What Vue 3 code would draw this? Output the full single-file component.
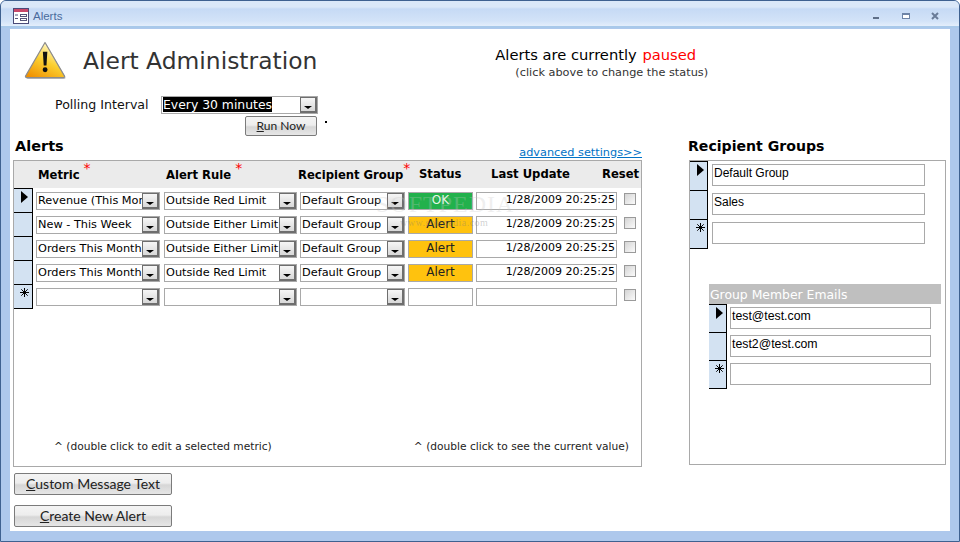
<script setup>
const rows = [
  { metric: 'Revenue (This Month)', rule: 'Outside Red Limit', group: 'Default Group', status: 'OK', kind: 'ok', update: '1/28/2009 20:25:25', current: true },
  { metric: 'New - This Week', rule: 'Outside Either Limit', group: 'Default Group', status: 'Alert', kind: 'alert', update: '1/28/2009 20:25:25' },
  { metric: 'Orders This Month', rule: 'Outside Either Limit', group: 'Default Group', status: 'Alert', kind: 'alert', update: '1/28/2009 20:25:25' },
  { metric: 'Orders This Month', rule: 'Outside Red Limit', group: 'Default Group', status: 'Alert', kind: 'alert', update: '1/28/2009 20:25:25' },
  { metric: '', rule: '', group: '', status: '', kind: '', update: '', isNew: true }
]
const columns = [
  { key: 'metric', cls: 'c-metric' },
  { key: 'rule', cls: 'c-rule' },
  { key: 'group', cls: 'c-group' }
]
const groups = [{ name: 'Default Group', current: true }, { name: 'Sales' }, { name: '', isNew: true }]
const emails = [{ name: 'test@test.com', current: true }, { name: 'test2@test.com' }, { name: '', isNew: true }]
</script>

<template>
  <div class="window">
    <header class="titlebar">
      <svg class="formicon" width="16" height="16" viewBox="0 0 16 16">
        <rect x="0.5" y="0.5" width="15" height="15" fill="#fff" stroke="#4a4a78" />
        <rect x="1" y="1" width="14" height="3" fill="#c8486a" />
        <path d="M2 7h3M2 10.500h3" stroke="#55557a" />
        <rect x="7.500" y="6.500" width="6" height="2" fill="#fff" stroke="#55557a" />
        <rect x="7.500" y="10.500" width="6" height="2" fill="#fff" stroke="#55557a" />
      </svg>
      <span class="wintitle">Alerts</span>
      <div class="winbtns">
        <svg width="8" height="8" viewBox="0 0 8 8"><rect x="0" y="5" width="6" height="2" fill="#5f6f88" /></svg>
        <svg width="8" height="8" viewBox="0 0 8 8"><rect x="0.500" y="1.500" width="7" height="5" fill="#fff" stroke="#6d83a6" /><rect x="0" y="1" width="8" height="2" fill="#6d83a6" /></svg>
        <svg width="8" height="8" viewBox="0 0 8 8"><path d="M1 1l6 6M7 1l-6 6" stroke="#6a7c98" stroke-width="2" /></svg>
      </div>
    </header>

    <div class="frame">
      <main class="form">
        <section class="head">
          <svg class="warn" width="43" height="39" viewBox="0 0 44 40">
            <defs>
              <linearGradient id="warnfill" x1="0.15" y1="1" x2="0.7" y2="0">
                <stop offset="0" stop-color="#f09000" />
                <stop offset="0.5" stop-color="#fbcf30" />
                <stop offset="0.85" stop-color="#fff0a8" />
                <stop offset="1" stop-color="#ffffff" />
              </linearGradient>
            </defs>
            <path d="M22.500 2.500 L42.500 37 Q43 39 41 39 L4 39 Q2 39 2.500 37 Z" fill="#bbb" />
            <path d="M21.500 1.500 L41.500 36 Q42 37.500 40 37.500 L3 37.500 Q1 37.500 1.500 36 Z" fill="url(#warnfill)" stroke="#8c8c8c" stroke-width="1.200" stroke-linejoin="round" />
            <path d="M19.300 11 h4.600 l-0.900 14 h-2.800 z" fill="#111" />
            <circle cx="21.600" cy="29.500" r="2.500" fill="#111" />
          </svg>
          <h1 class="title">Alert Administration</h1>
          <div class="state">
            <div class="state-main">Alerts are currently <span class="paused">paused</span></div>
            <div class="state-sub">(click above to change the status)</div>
          </div>
        </section>

        <section class="poll">
          <span class="poll-label">Polling Interval</span>
          <div class="combo poll-combo">
            <span class="combo-text"><span class="selected">Every 30 minutes</span></span>
            <span class="arrow"></span>
          </div>
        </section>
        <section class="run">
          <button class="btn run-btn"><u>R</u>un Now</button>
          <span class="dot"></span>
        </section>

        <section class="lists">
          <div class="left">
            <div class="section-head">
              <h2>Alerts</h2>
              <a class="advanced">advanced settings&gt;&gt;</a>
            </div>
            <div class="alerts-panel">
              <div class="col-heads">
                <span class="h-metric">Metric <i>*</i></span>
                <span class="h-rule">Alert Rule <i>*</i></span>
                <span class="h-group">Recipient Group<i>*</i></span>
                <span class="h-status">Status</span>
                <span class="h-update">Last Update</span>
                <span class="h-reset">Reset</span>
              </div>
              <div class="alert-rows">
                <div v-for="(r, i) in rows" :key="i" class="alert-row">
                  <div class="selector">
                    <span v-if="r.current" class="tri"></span>
                    <svg v-if="r.isNew" class="star" width="9" height="9" viewBox="0 0 9 9"><path d="M4.500 0v9M0 4.500h9M1.300 1.300l6.400 6.400M7.700 1.300l-6.400 6.400" stroke="#000" fill="none" /></svg>
                  </div>
                  <div v-for="c in columns" :key="c.key" class="combo" :class="c.cls">
                    <span class="combo-text">{{ r[c.key] }}</span>
                    <span class="arrow"></span>
                  </div>
                  <div class="status" :class="r.kind">{{ r.status }}</div>
                  <div class="updated">{{ r.update }}</div>
                  <span class="check"></span>
                </div>
              </div>
              <div class="notes">
                <span>^ (double click to edit a selected metric)</span>
                <span>^ (double click to see the current value)</span>
              </div>
              <div class="watermark">SOFTPEDIA<small>www.softpedia.com</small></div>
            </div>
            <div class="actions">
              <button class="btn big"><u>C</u>ustom Message Text</button>
              <button class="btn big"><u>C</u>reate New Alert</button>
            </div>
          </div>

          <div class="right">
            <div class="section-head"><h2>Recipient Groups</h2></div>
            <div class="groups-panel">
              <div class="plain-list">
                <div v-for="(g, i) in groups" :key="i" class="plain-row">
                  <div class="selector side">
                    <span v-if="g.current" class="tri"></span>
                    <svg v-if="g.isNew" class="star" width="9" height="9" viewBox="0 0 9 9"><path d="M4.500 0v9M0 4.500h9M1.300 1.300l6.400 6.400M7.700 1.300l-6.400 6.400" stroke="#000" fill="none" /></svg>
                  </div>
                  <div class="field">{{ g.name }}</div>
                </div>
              </div>
              <div class="members">
                <div class="members-title">Group Member Emails</div>
                <div v-for="(m, i) in emails" :key="i" class="plain-row email-row">
                  <div class="selector side">
                    <span v-if="m.current" class="tri"></span>
                    <svg v-if="m.isNew" class="star" width="9" height="9" viewBox="0 0 9 9"><path d="M4.500 0v9M0 4.500h9M1.300 1.300l6.400 6.400M7.700 1.300l-6.400 6.400" stroke="#000" fill="none" /></svg>
                  </div>
                  <div class="field email">{{ m.name }}</div>
                </div>
              </div>
            </div>
          </div>
        </section>
      </main>
    </div>
  </div>
</template>

<style>
html, body { margin: 0; background: #fff; }
</style>

<style scoped>
.window {
  width: 960px;
  height: 542px;
  box-sizing: border-box;
  display: flex;
  flex-direction: column;
  border: 1px solid #3f6190;
  border-radius: 6px 6px 0 0;
  background: #aec8ec;
  overflow: hidden;
  font-family: "DejaVu Sans", Verdana, sans-serif;
  color: #000;
}
.titlebar {
  height: 27px;
  flex: none;
  box-sizing: border-box;
  display: flex;
  align-items: center;
  padding: 5px 0 0 12px;
  background: linear-gradient(#dbe8f8 0, #dbe8f8 6px, #c6daf5 8px, #d3e3f8 20px, #e4eefb 25px);
  border-bottom: 2px solid #a9c9ea;
}
.wintitle {
  margin-left: 4px;
  font-family: "Liberation Sans", Arial, sans-serif;
  font-size: 11.500px;
  color: #4a6a9c;
}
.winbtns {
  margin-left: auto;
  display: flex;
  gap: 21px;
  padding-right: 20px;
}
.frame {
  flex: 1;
  min-height: 0;
  padding: 1px 9px 10px;
  display: flex;
}
.form {
  flex: 1;
  background: #fff;
  display: flex;
  flex-direction: column;
}
.head {
  height: 66px;
  display: flex;
  align-items: flex-start;
}
.warn { margin: 12px 0 0 14px; flex: none; }
.title {
  margin: 15px 0 0 16px;
  font-size: 23.400px;
  line-height: 34px;
  font-weight: 400;
  color: #333;
  white-space: nowrap;
}
.state { margin: 16px 0 0 178px; }
.state-main { font-size: 14.700px; line-height: 20px; }
.paused { color: #f00; margin-left: 1px; }
.state-sub { font-size: 11.300px; line-height: 14px; margin: 1px 0 0 20px; color: #333; }
.poll {
  height: 19px;
  display: flex;
  align-items: center;
  padding-left: 45px;
}
.poll-label { width: 106px; font-size: 12.600px; color: #111; }
.combo {
  display: flex;
  height: 18px;
  box-sizing: border-box;
  border: 1px solid #a9a9a9;
  background: #fff;
  overflow: hidden;
}
.poll-combo { width: 157px; }
.combo-text {
  flex: 1;
  min-width: 0;
  font-size: 11.300px;
  line-height: 15px;
  padding-left: 1px;
  white-space: nowrap;
  overflow: hidden;
}
.poll-combo .combo-text { font-size: 12.400px; line-height: 16px; padding-left: 1px; }
.selected { background: #000; color: #fff; }
.arrow {
  position: relative;
  flex: none;
  width: 17px;
  box-sizing: border-box;
  border: 1px solid #6e6e6e;
  border-right-width: 2px;
  border-bottom-width: 2px;
  background: linear-gradient(#f6f6f6, #d8d8d8);
}
.arrow::after {
  content: "";
  position: absolute;
  left: 3px;
  bottom: 2px;
  border-style: solid;
  border-width: 3px 4px 0;
  border-color: #000 transparent transparent;
}
.run {
  height: 23px;
  display: flex;
  align-items: flex-start;
  padding: 2px 0 0 235px;
}
.btn {
  box-sizing: border-box;
  border: 1px solid #7b7b7b;
  border-radius: 2px;
  background: linear-gradient(#f4f4f4 0, #ededed 45%, #d6d6d6 55%, #e6e6e6 100%);
  padding: 0 0 2px;
  color: #222;
  font-family: Lato, "Open Sans", sans-serif;
  cursor: default;
}
.run-btn { width: 72px; height: 20px; font-size: 12px; line-height: 15px; }
.dot { width: 2px; height: 2px; margin: 5px 0 0 8px; background: #000; }
.lists {
  flex: 1;
  display: flex;
  padding-left: 3px;
}
.left { width: 630px; flex: none; }
.right { width: 259px; margin-left: 46px; }
.section-head {
  height: 21px;
  display: flex;
  align-items: flex-start;
  justify-content: space-between;
}
.section-head h2 {
  margin: -4px 0 0;
  font-size: 14.500px;
  line-height: 22px;
  font-weight: 700;
  white-space: nowrap;
}
.left h2 { margin-left: 2px; }
.right h2 { margin-left: -1px; font-size: 14.100px; }
.left .section-head { width: 629px; }
.advanced {
  margin-top: 7px;
  font-size: 11.300px;
  line-height: 14px;
  color: #0072c6;
  text-decoration: underline;
}
.alerts-panel {
  position: relative;
  width: 629px;
  height: 307px;
  box-sizing: border-box;
  border: 1px solid #a9a9a9;
  display: flex;
  flex-direction: column;
}
.col-heads {
  height: 27px;
  padding-bottom: 2px;
  box-sizing: border-box;
  flex: none;
  background: #ebebeb;
  display: flex;
  align-items: center;
  font-size: 11.600px;
  font-weight: 700;
  white-space: nowrap;
}
.col-heads i {
  color: #f00;
  font-style: normal;
  font-weight: 400;
  font-size: 14px;
  position: relative;
  top: -6px;
}
.h-metric { margin-left: 24px; width: 128px; }
.h-rule { width: 132px; }
.h-group { width: 121px; }
.h-status { width: 72px; }
.h-update { width: 111px; }
.h-reset { width: 38px; }
.alert-row {
  height: 24px;
  display: flex;
  align-items: flex-start;
}
.selector {
  position: relative;
  flex: none;
  width: 18px;
  height: 100%;
  background: #d3e2f2;
  border-top: 1px solid #000;
  border-right: 1px solid #000;
  margin-right: 2px;
}
.alert-row .selector { height: 23px; margin-right: 3px; }
.alert-row:last-child .selector { border-bottom: 1px solid #000; }
.tri {
  position: absolute;
  left: 7px;
  top: 2px;
  border-style: solid;
  border-width: 6px 0 6px 7px;
  border-color: transparent transparent transparent #000;
}
.star {
  position: absolute;
  left: 6px;
  top: 3px;
}
.alert-row .combo, .status, .updated { margin-top: 4px; }
.c-metric { width: 124px; margin-right: 4px; }
.c-rule { width: 133px; margin-right: 3px; }
.c-group { width: 105px; margin-right: 3px; }
.status {
  width: 65px;
  height: 18px;
  box-sizing: border-box;
  border: 1px solid #a9a9a9;
  margin-right: 3px;
  text-align: center;
  font-size: 12px;
  line-height: 14px;
}
.status.ok { background: #22b14c; color: #e8f8e8; }
.status.alert { background: #ffc20e; color: #222; }
.updated {
  width: 141px;
  height: 18px;
  box-sizing: border-box;
  border: 1px solid #a9a9a9;
  text-align: right;
  padding-right: 1px;
  font-size: 11px;
  line-height: 13px;
  white-space: nowrap;
}
.check {
  flex: none;
  width: 12px;
  height: 12px;
  box-sizing: border-box;
  margin: 5px 0 0 7px;
  border: 1px solid #9a9a9a;
  background: linear-gradient(135deg, #d4d4d4, #fbfbfb);
}
.notes {
  margin-top: auto;
  height: 26px;
  display: flex;
  justify-content: space-between;
  padding: 0 12px 0 40px;
  font-size: 10.650px;
  line-height: 14px;
  color: #222;
}
.watermark {
  position: absolute;
  left: 362px;
  top: 29px;
  width: 140px;
  font-family: "Liberation Serif", serif;
  font-size: 24px;
  line-height: 28px;
  letter-spacing: 1px;
  color: rgba(200, 200, 200, 0.3);
  white-space: nowrap;
  pointer-events: none;
}
.watermark small {
  display: block;
  font-size: 10px;
  line-height: 10px;
  margin: 0 0 0 24px;
  letter-spacing: 0.500px;
  color: rgba(120, 120, 120, 0.35);
}
.actions {
  display: flex;
  flex-direction: column;
  gap: 10px;
  padding: 6px 0 0 1px;
}
.big {
  width: 158px;
  height: 22px;
  font-size: 14px;
  line-height: 15px;
}
.groups-panel {
  width: 257px;
  height: 305px;
  box-sizing: border-box;
  border: 1px solid #a9a9a9;
}
.plain-row { display: flex; align-items: flex-start; height: 29px; }
.plain-row .selector { width: 17px; height: 28px; margin-right: 4px; }
.plain-row:last-child .selector { border-bottom: 1px solid #000; }
.field {
  width: 213px;
  height: 22px;
  box-sizing: border-box;
  margin-top: 3px;
  border: 1px solid #a9a9a9;
  padding-left: 1px;
  font-family: "Liberation Sans", Arial, sans-serif;
  font-size: 12px;
  line-height: 17px;
}
.members { margin: 36px 0 0 19px; width: 232px; }
.members-title {
  height: 20px;
  background: #bfbfbf;
  color: #fff;
  font-size: 12.400px;
  line-height: 21px;
  padding-left: 1px;
}
.email-row { height: 28px; }
.plain-row.email-row .selector { height: 27px; margin-right: 3px; }
.email { width: 201px; font-size: 12.300px; }
</style>
